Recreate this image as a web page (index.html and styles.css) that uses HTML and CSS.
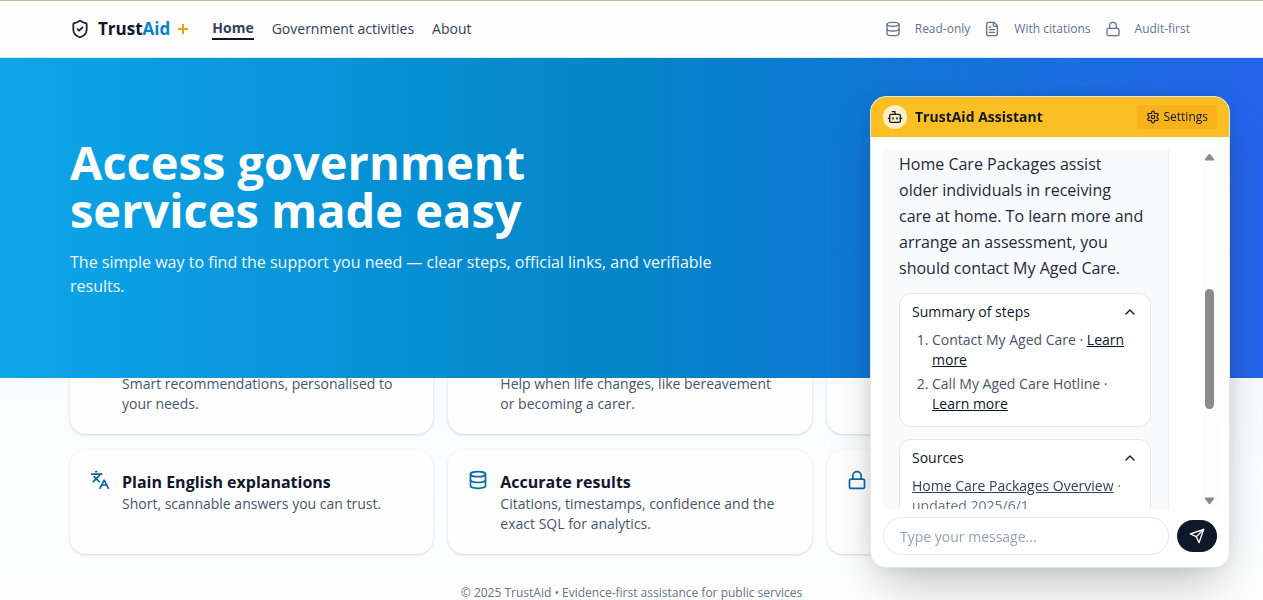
FILE: index.html
```html
<!DOCTYPE html>
<html lang="en">
<head>
<meta charset="utf-8">
<meta name="viewport" content="width=device-width, initial-scale=1">
<title>TrustAid</title>
<link rel="stylesheet" href="styles.css">
</head>
<body>
<svg class="sprite" aria-hidden="true">
  <symbol id="i-database" viewBox="0 0 24 24"><ellipse cx="12" cy="5" rx="9" ry="3"/><path d="M3 5v14a9 3 0 0 0 18 0V5"/><path d="M3 12a9 3 0 0 0 18 0"/></symbol>
  <symbol id="i-lock" viewBox="0 0 24 24"><rect x="3" y="11" width="18" height="11" rx="2"/><path d="M7 11V7a5 5 0 0 1 10 0v4"/></symbol>
  <symbol id="i-up" viewBox="0 0 24 24"><path d="m18 15-6-6-6 6"/></symbol>
</svg>

<header class="topbar">
  <div class="wrap topbar-row">
    <a class="brand" href="#">
      <svg class="icon icon-20" viewBox="0 0 24 24"><path d="M20 13c0 5-3.500 7.500-7.660 8.950a1 1 0 0 1-.67-.01C7.500 20.500 4 18 4 13V6a1 1 0 0 1 1-1c2 0 4.500-1.200 6.240-2.720a1.170 1.170 0 0 1 1.520 0C14.510 3.810 17 5 19 5a1 1 0 0 1 1 1z"/><path d="m9 12 2 2 4-4"/></svg>
      <span class="brand-name">Trust<span class="brand-accent">Aid</span></span>
      <svg class="brand-plus" viewBox="0 0 10 10"><path d="M5 0v10M0 5h10"/></svg>
    </a>
    <nav class="nav" aria-label="Main">
      <a class="nav-link nav-current" href="#" aria-current="page">Home</a>
      <a class="nav-link" href="#">Government activities</a>
      <a class="nav-link" href="#">About</a>
    </nav>
    <ul class="badges">
      <li class="badge"><svg class="icon icon-16"><use href="#i-database"/></svg>Read-only</li>
      <li class="badge"><svg class="icon icon-16" viewBox="0 0 24 24"><path d="M15 2H6a2 2 0 0 0-2 2v16a2 2 0 0 0 2 2h12a2 2 0 0 0 2-2V7z"/><path d="M14 2v4a2 2 0 0 0 2 2h4"/><path d="M10 9H8M16 13H8M16 17H8"/></svg>With citations</li>
      <li class="badge"><svg class="icon icon-16"><use href="#i-lock"/></svg>Audit-first</li>
    </ul>
  </div>
</header>

<main>
  <section class="hero">
    <div class="wrap">
      <h1 class="hero-title">Access government services made easy</h1>
      <p class="hero-text">The simple way to find the support you need — clear steps, official links, and verifiable results.</p>
    </div>
  </section>

  <section class="features">
    <div class="wrap features-grid">
      <article class="feature">
        <div class="feature-body feature-bare"><p class="feature-text">Smart recommendations, personalised to your needs.</p></div>
      </article>
      <article class="feature">
        <div class="feature-body feature-bare"><p class="feature-text">Help when life changes, like bereavement or becoming a carer.</p></div>
      </article>
      <article class="feature"></article>
      <article class="feature">
        <svg class="icon icon-20" viewBox="0 0 24 24"><path d="m5 8 6 6"/><path d="m4 14 6-6 2-3"/><path d="M2 5h12"/><path d="M7 2h1"/><path d="m22 22-5-10-5 10"/><path d="M14 18h6"/></svg>
        <div class="feature-body"><h2 class="feature-title">Plain English explanations</h2><p class="feature-text">Short, scannable answers you can trust.</p></div>
      </article>
      <article class="feature">
        <svg class="icon icon-20"><use href="#i-database"/></svg>
        <div class="feature-body"><h2 class="feature-title">Accurate results</h2><p class="feature-text">Citations, timestamps, confidence and the exact SQL for analytics.</p></div>
      </article>
      <article class="feature">
        <svg class="icon icon-20"><use href="#i-lock"/></svg>
      </article>
    </div>
  </section>
</main>

<footer class="footer">© 2025 TrustAid • Evidence-first assistance for public services</footer>

<aside class="chat" aria-label="TrustAid Assistant">
  <div class="chat-head">
    <span class="avatar"><svg class="icon icon-16" viewBox="0 0 24 24"><path d="M12 8V4H8"/><rect x="4" y="8" width="16" height="12" rx="2"/><path d="M2 14h2M20 14h2M15 13v2M9 13v2"/></svg></span>
    <h2 class="chat-title">TrustAid Assistant</h2>
    <button class="settings" type="button"><svg class="icon icon-14" viewBox="0 0 24 24"><path d="M12.220 2h-.44a2 2 0 0 0-2 2v.18a2 2 0 0 1-1 1.730l-.43.25a2 2 0 0 1-2 0l-.15-.08a2 2 0 0 0-2.730.73l-.22.38a2 2 0 0 0 .73 2.730l.15.1a2 2 0 0 1 1 1.720v.51a2 2 0 0 1-1 1.740l-.15.09a2 2 0 0 0-.73 2.730l.22.38a2 2 0 0 0 2.730.73l.15-.08a2 2 0 0 1 2 0l.43.25a2 2 0 0 1 1 1.730V20a2 2 0 0 0 2 2h.44a2 2 0 0 0 2-2v-.18a2 2 0 0 1 1-1.730l.43-.25a2 2 0 0 1 2 0l.15.08a2 2 0 0 0 2.730-.73l.22-.39a2 2 0 0 0-.73-2.730l-.15-.08a2 2 0 0 1-1-1.740v-.5a2 2 0 0 1 1-1.740l.15-.09a2 2 0 0 0 .73-2.730l-.22-.38a2 2 0 0 0-2.730-.73l-.15.08a2 2 0 0 1-2 0l-.43-.25a2 2 0 0 1-1-1.730V4a2 2 0 0 0-2-2z"/><circle cx="12" cy="12" r="3"/></svg>Settings</button>
  </div>
  <div class="chat-body">
    <div class="log">
      <div class="bubble">
        <p class="answer">Home Care Packages assist<br>older individuals in receiving care at home. To learn more and arrange an assessment, you should contact My Aged Care.</p>
        <section class="panel">
          <button class="panel-head" type="button" aria-expanded="true">Summary of steps<svg class="icon icon-16"><use href="#i-up"/></svg></button>
          <ol class="steps">
            <li>Contact My Aged Care · <a class="link" href="#">Learn more</a></li>
            <li>Call My Aged Care Hotline · <a class="link" href="#">Learn more</a></li>
          </ol>
        </section>
        <section class="panel">
          <button class="panel-head" type="button" aria-expanded="true">Sources<svg class="icon icon-16"><use href="#i-up"/></svg></button>
          <p class="source"><a class="source-link" href="#">Home Care Packages Overview</a> · updated 2025/6/1</p>
        </section>
      </div>
      <div class="scrollbar" aria-hidden="true">
        <svg class="arrow" viewBox="0 0 9 8"><path d="M3.500 1.500q1-1 2 0L9 6v1.500H0V6z"/></svg>
        <div class="track"><div class="thumb"></div></div>
        <svg class="arrow" viewBox="0 0 9 8"><path d="M3.500 6.500q1 1 2 0L9 2V.5H0V2z"/></svg>
      </div>
    </div>
    <form class="composer">
      <input class="message" type="text" placeholder="Type your message..." aria-label="Your message">
      <button class="send" type="button" aria-label="Send"><svg class="icon icon-16" viewBox="0 0 24 24"><path d="M22 2 15 22l-4-9-9-4z"/><path d="M22 2 11 13"/></svg></button>
    </form>
  </div>
</aside>
</body>
</html>
```

FILE: styles.css
```css
* { box-sizing: border-box; }
html { height: 100%; overflow: hidden; }
body {
  margin: 0;
  min-height: 100%;
  border-top: 1px solid #cdb394;
  background: linear-gradient(#f0f9ff, #fefefe);
  color: #0f172a;
  font-family: "Open Sans", "Noto Sans", sans-serif;
  font-size: 14px;
  line-height: 20px;
}
h1, h2, p, ul, ol { margin: 0; padding: 0; }
button, input { font: inherit; color: inherit; }
a { color: inherit; }

.sprite { position: absolute; width: 0; height: 0; }
.icon { flex: none; fill: none; stroke: currentColor; stroke-width: 2; stroke-linecap: round; stroke-linejoin: round; }
.icon-14 { width: 14px; height: 14px; }
.icon-16 { width: 16px; height: 16px; }
.icon-20 { width: 20px; height: 20px; }

.wrap { max-width: 1155px; margin: 0 auto; padding: 0 19px 0 16px; }

.topbar { background: #fefefe; border-bottom: 1px solid #e2e8f0; }
.topbar-row { display: flex; align-items: center; height: 56px; }
.brand { display: flex; align-items: center; gap: 8px; text-decoration: none; }
.brand-name { font-size: 17px; font-weight: 700; line-height: 24px; }
.brand-accent { color: #0284c7; }
.brand-plus { width: 10px; height: 10px; fill: none; stroke: #f59e0b; stroke-width: 2; }
.nav { display: flex; align-items: center; gap: 18px; margin-left: 24px; color: #334155; }
.nav-link { text-decoration: none; }
.nav-current { font-weight: 700; border-bottom: 2px solid #0f172a; }
.badges { display: flex; gap: 14px; margin-left: auto; list-style: none; color: #64748b; font-size: 12px; }
.badge { display: flex; align-items: center; gap: 14px; }

.hero {
  position: relative;
  z-index: 1;
  min-height: 320px;
  padding: 80px 0;
  background: linear-gradient(90deg, #0ea5e9, #0284c7 50%, #2563eb);
  color: #fff;
}
.hero-title { max-width: 640px; font-size: 47px; line-height: 48px; font-weight: 700; }
.hero-text { max-width: 672px; margin-top: 16px; font-size: 16px; line-height: 24px; color: #f0f9ff; }

.features { margin-top: -48px; }
.features-grid { display: grid; grid-template-columns: repeat(3, 1fr); gap: 16px 15px; }
.feature {
  display: flex;
  gap: 12px;
  min-height: 104px;
  padding: 20px 32px 20px 20px;
  border-radius: 16px;
  background: #fefefe;
  box-shadow: 0 1px 3px rgba(0, 0, 0, .16);
  color: #0369a1;
}
.feature-bare { padding: 24px 0 0 32px; }
.feature-title { font-size: 16px; line-height: 24px; font-weight: 700; color: #0f172a; }
.feature-text { color: #475569; }

.footer { margin-top: 32px; text-align: center; font-size: 12px; line-height: 14px; color: #64748b; }

.chat {
  position: fixed;
  z-index: 2;
  right: 33px;
  bottom: 32px;
  width: 360px;
  overflow: hidden;
  border: 1px solid #e2e8f0;
  border-radius: 16px;
  background: #fff;
  box-shadow: 0 25px 50px -12px rgba(0, 0, 0, .25), 0 0 20px rgba(0, 0, 0, .08);
}
.chat-head { display: flex; align-items: center; gap: 8px; padding: 8px 12px; background: #fbbf24; }
.avatar { display: grid; place-items: center; width: 24px; height: 24px; border-radius: 50%; background: #fef0c4; }
.chat-title { font-size: 14px; line-height: 24px; font-weight: 700; }
.settings { display: flex; align-items: center; gap: 4px; height: 24px; margin-left: auto; padding: 0 9px; border: 0; border-radius: 4px; background: #fab21c; font-size: 12px; }
.chat-body { padding: 12px; }
.log { display: flex; justify-content: space-between; height: 360px; overflow: hidden; }
.bubble { width: 286px; height: 400px; padding: 2px 17px 0 16px; border-right: 1px solid #eef1f5; background: #f8fafc; }
.answer { max-width: 248px; font-size: 16px; line-height: 26px; color: #1e293b; }
.panel { margin-top: 12px; padding: 8px 12px 12px; border: 1px solid #e2e8f0; border-radius: 12px; background: #fff; }
.panel-head { display: flex; align-items: center; justify-content: space-between; width: 100%; padding: 0; border: 0; background: none; text-align: left; }
.steps { display: grid; gap: 4px; margin-top: 8px; padding-left: 20px; color: #475569; }
.link { color: #0f172a; }
.source { margin-top: 8px; color: #64748b; }
.source-link { color: #334155; }

.scrollbar { display: flex; flex-direction: column; align-items: center; width: 15px; padding: 4px 0; background: #fcfcfc; }
.arrow { width: 9px; height: 8px; fill: #8b8b8b; }
.track { flex: 1; width: 9px; padding-top: 128px; }
.thumb { height: 120px; border-radius: 5px; background: #8b8b8b; }

.composer { display: flex; align-items: center; gap: 8px; margin-top: 8px; }
.message { flex: 1; min-width: 0; height: 38px; padding: 0 16px; border: 1px solid #e2e8f0; border-radius: 19px; background: #fff; }
.message::placeholder { color: #94a3b8; opacity: 1; }
.send { display: grid; place-items: center; width: 40px; height: 32px; padding: 0; border: 0; border-radius: 16px; background: #0f172a; color: #fff; }
```
